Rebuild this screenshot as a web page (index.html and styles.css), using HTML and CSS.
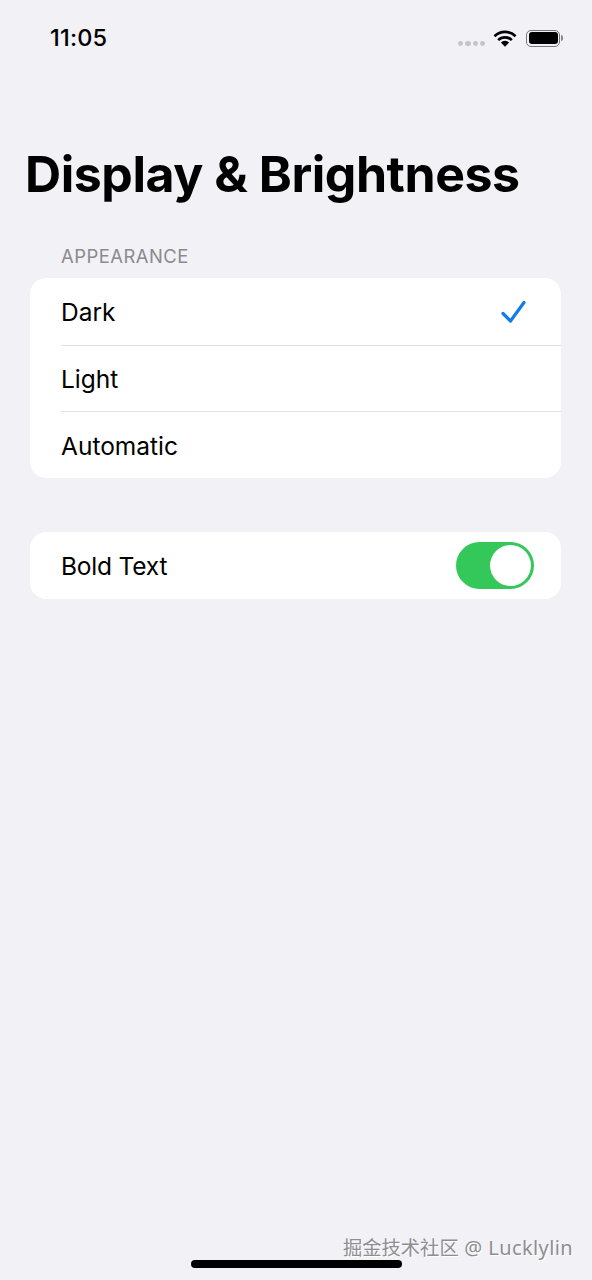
FILE: index.html
```html
<!DOCTYPE html>
<html lang="en">
<head>
<meta charset="utf-8">
<title>Display &amp; Brightness</title>
<link rel="stylesheet" href="styles.css">
</head>
<body>
<div class="screen">
  <header class="status">
    <span class="time">11:05</span>
    <div class="status-icons">
      <span class="dots"><i></i><i></i><i></i><i></i></span>
      <svg class="wifi" width="24" height="19" viewBox="0 0 25 19">
        <path d="M1.5 7.2 A15.6 15.6 0 0 1 23.5 7.2" fill="none" stroke="#000" stroke-width="2.8"/>
        <path d="M5.4 11.2 A10 10 0 0 1 19.6 11.2" fill="none" stroke="#000" stroke-width="2.8"/>
        <path d="M12.5 18.2 L8.2 13.7 A6 6 0 0 1 16.8 13.7 Z" fill="#000"/>
      </svg>
      <span class="battery"><span class="battery-fill"></span></span>
      <span class="battery-cap"></span>
    </div>
  </header>
  <h1 class="title">Display &amp; Brightness</h1>
  <div class="section-label">APPEARANCE</div>
  <section class="card">
    <div class="row">
      <span class="label">Dark</span>
      <svg class="check" width="26" height="24" viewBox="0 0 26 24"><path d="M2 13.5 L9.5 21 L23 2.5" fill="none" stroke="#147ce5" stroke-width="3.2" stroke-linecap="round" stroke-linejoin="round"/></svg>
    </div>
    <div class="row"><span class="label">Light</span></div>
    <div class="row"><span class="label">Automatic</span></div>
  </section>
  <section class="card card-second">
    <div class="row">
      <span class="label bold-label">Bold Text</span>
      <span class="switch"><span class="knob"></span></span>
    </div>
  </section>
  <div class="footer">
    <span class="home"></span>
    <span class="watermark"><span class="wm-cjk">掘金技术社区</span> @ Lucklylin</span>
  </div>
</div>
</body>
</html>
```
FILE: styles.css
```css
* { box-sizing: border-box; }
html, body { margin: 0; padding: 0; }
body {
  width: 592px;
  height: 1280px;
  overflow: hidden;
  background: #f1f1f6;
  font-family: Inter, "Liberation Sans", "Noto Sans CJK SC", sans-serif;
  color: #000;
}
.screen { display: flex; flex-direction: column; height: 1280px; }
.status {
  display: flex;
  justify-content: space-between;
  align-items: center;
  height: 24px;
  margin-top: 26px;
  padding: 0 29px 0 50px;
}
.time { font-size: 23.5px; font-weight: 500; letter-spacing: 0.2px; line-height: 24px; }
.status-icons { display: flex; align-items: center; }
.dots { display: flex; gap: 2px; margin: 11px 8px 0 0; }
.dots i { width: 5.25px; height: 5px; border-radius: 50%; background: #c4c4c8; }
.wifi { margin-right: 9px; }
.battery {
  display: block;
  width: 34px;
  height: 17px;
  border: 1px solid #77777a;
  border-radius: 5px;
  padding: 1.5px;
}
.battery-fill { display: block; height: 100%; background: #000; border-radius: 3px; }
.battery-cap { width: 2px; height: 6px; margin-left: 1px; background: #88888b; border-radius: 0 2px 2px 0; }
.title {
  margin: 97px 0 0 25px;
  font-size: 50px;
  line-height: 54px;
  font-weight: 700;
  letter-spacing: -0.45px;
}
.section-label {
  margin: 43px 0 0 61px;
  font-size: 18.4px;
  line-height: 24px;
  letter-spacing: 0.5px;
  color: #8a8a8f;
}
.card {
  margin: 10px 31px 0 30px;
  background: #fff;
  border-radius: 16px;
  overflow: hidden;
}
.card-second { margin-top: 54px; }
.row {
  position: relative;
  display: flex;
  align-items: center;
  justify-content: space-between;
  height: 66.67px;
  padding: 0 27px 0 31px;
  font-size: 24.5px;
}
.row + .row::before {
  content: "";
  position: absolute;
  left: 31px;
  right: 0;
  top: 0;
  height: 1px;
  background: #e2e2e5;
}
.label { padding-top: 2px; }
.bold-label { letter-spacing: -0.2px; }
.check { margin-right: 7px; margin-top: 2px; }
.switch {
  display: flex;
  justify-content: flex-end;
  width: 78px;
  height: 47px;
  border-radius: 24px;
  background: #34c759;
  padding: 3px;
}
.knob { width: 41px; height: 41px; border-radius: 50%; background: #fff; }
.footer {
  position: relative;
  margin-top: auto;
  height: 50px;
}
.home {
  position: absolute;
  left: 191px;
  top: 30px;
  width: 211px;
  height: 8px;
  border-radius: 4px;
  background: #000;
}
.watermark {
  position: absolute;
  left: 343px;
  top: 6px;
  font-size: 20px;
  line-height: 24px;
  letter-spacing: 0.4px;
  color: #8e8e92;
  text-shadow: 1px 1px 0 #fff;
  white-space: nowrap;
  font-family: "Noto Sans", "Noto Sans CJK SC", sans-serif;
}
.wm-cjk { font-size: 19.3px; letter-spacing: 0; }
```
